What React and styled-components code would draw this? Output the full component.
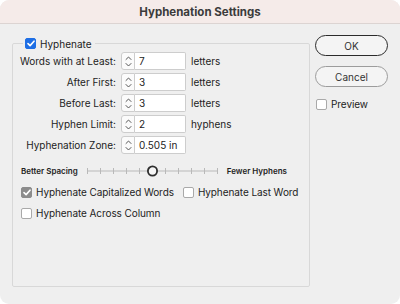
import React from 'react'
import styled, { createGlobalStyle } from 'styled-components'

const GlobalStyle = createGlobalStyle`
  html, body {
    margin: 0;
    padding: 0;
    background: #ffffff;
  }
  body {
    font-family: Inter, "Liberation Sans", sans-serif;
    color: #232323;
  }
`

const Window = styled.div`
  width: 400px;
  height: 304px;
  background: #efefef;
  border-radius: 9px;
  overflow: hidden;
  display: flex;
  flex-direction: column;
`

const TitleBar = styled.header`
  flex: none;
  height: 23px;
  display: flex;
  align-items: center;
  justify-content: center;
  background: #f5ebe9;
  border-bottom: 1px solid #dcd4d2;
  font-size: 11.5px;
  font-weight: 700;
  color: #3b3b3b;
`

const Body = styled.div`
  display: flex;
  align-items: flex-start;
  padding: 11px 12px 0 12px;
`

const Group = styled.fieldset`
  margin: 2px 0 0 0;
  width: 298px;
  height: 250px;
  box-sizing: border-box;
  border: 1px solid #d8d8d8;
  border-radius: 2px;
  padding: 2px 0 0 0;
  min-width: 0;
`

const Legend = styled.legend`
  margin-left: 10px;
  padding: 0 3px 0 2px;
  display: flex;
  align-items: center;
  gap: 4px;
  font-size: 10px;
  height: 13px;
`

const Fields = styled.div`
  display: flex;
  flex-direction: column;
  gap: 3px;
`

const FieldRow = styled.div`
  display: flex;
  align-items: center;
  height: 18px;
`

const Label = styled.span`
  width: 103px;
  text-align: right;
  font-size: 10px;
  white-space: nowrap;
`

const Spinner = styled.span`
  margin-left: 5px;
  width: 14px;
  height: 18px;
  box-sizing: border-box;
  background: #fbfbfb;
  border: 1px solid #cdcdcd;
  border-radius: 3px 0 0 3px;
  display: flex;
  align-items: center;
  justify-content: center;
`

const Input = styled.span`
  width: 51px;
  height: 18px;
  box-sizing: border-box;
  background: #ffffff;
  border: 1px solid #cdcdcd;
  border-left: none;
  border-radius: 0 2px 2px 0;
  padding-left: 4px;
  display: flex;
  align-items: center;
  font-size: 10px;
`

const Unit = styled.span`
  margin-left: 5px;
  font-size: 10px;
`

const SliderRow = styled.div`
  display: flex;
  align-items: center;
  gap: 9px;
  height: 14px;
  margin-top: 10px;
  padding-left: 8px;
`

const SliderLabel = styled.span`
  font-size: 8px;
  font-weight: 600;
  white-space: nowrap;
`

const CheckRow = styled.div`
  display: flex;
  align-items: center;
  height: 14px;
  margin-top: 7px;
  padding-left: 8px;
  gap: 9px;
`

const CheckItem = styled.label`
  display: flex;
  align-items: center;
  gap: 4px;
  font-size: 10px;
  letter-spacing: -0.08px;
  white-space: nowrap;
`

const Box = styled.span`
  flex: none;
  width: 11px;
  height: 11px;
  box-sizing: border-box;
  border-radius: 2px;
  display: flex;
  align-items: center;
  justify-content: center;
  background: ${(p) => (p.$tone === 'blue' ? '#1f6fe5' : p.$tone === 'gray' ? '#8c8c8c' : '#ffffff')};
  border: 1px solid ${(p) => (p.$tone === 'blue' ? '#1f6fe5' : p.$tone === 'gray' ? '#8c8c8c' : '#a9a9a9')};
`

const Side = styled.div`
  margin-left: 5px;
  width: 73px;
  display: flex;
  flex-direction: column;
`

const Button = styled.button`
  width: 73px;
  height: 21px;
  box-sizing: border-box;
  border-radius: 11px;
  background: #f4f4f4;
  border: ${(p) => (p.$primary ? '1.5px solid #2b2b2b' : '1px solid #9c9c9c')};
  font-family: inherit;
  font-size: 10px;
  color: #333333;
  padding: 0;
  margin-top: ${(p) => (p.$primary ? '0' : '10px')};
`

const PreviewRow = styled.div`
  margin-top: 10px;
  margin-left: 1px;
  height: 14px;
  display: flex;
  align-items: center;
`

const Check = () => (
  <svg width="8" height="7" viewBox="0 0 8 7">
    <path d="M1 3.6 L3.1 5.6 L7 1.2" fill="none" stroke="#fff" strokeWidth="1.6" strokeLinecap="round" strokeLinejoin="round" />
  </svg>
)

const CheckBox = ({ tone }) => <Box $tone={tone}>{tone && <Check />}</Box>

const Stepper = () => (
  <svg width="7" height="13" viewBox="0 0 7 13">
    <path d="M1 4.5 L3.5 2 L6 4.5 M1 8.5 L3.5 11 L6 8.5" fill="none" stroke="#555" strokeWidth="1" strokeLinecap="round" strokeLinejoin="round" />
  </svg>
)

const Slider = ({ ticks, value }) => {
  const w = 131
  const step = (w - 1) / (ticks - 1)
  return (
    <svg width={w} height="14" viewBox={`0 0 ${w} 14`}>
      <line x1="0.5" y1="7" x2={w - 0.5} y2="7" stroke="#b9b9b9" strokeWidth="1" />
      {Array.from({ length: ticks }, (_, i) => (
        <line key={i} x1={0.5 + i * step} y1="4" x2={0.5 + i * step} y2="10" stroke="#b9b9b9" strokeWidth="1" />
      ))}
      <circle cx={0.5 + value * step} cy="7" r="4.6" fill="#f6f6f6" stroke="#2e2e2e" strokeWidth="1.8" />
    </svg>
  )
}

const fields = [
  { label: 'Words with at Least:', value: '7', unit: 'letters' },
  { label: 'After First:', value: '3', unit: 'letters' },
  { label: 'Before Last:', value: '3', unit: 'letters' },
  { label: 'Hyphen Limit:', value: '2', unit: 'hyphens' },
  { label: 'Hyphenation Zone:', value: '0.505 in' },
]

export default function App() {
  return (
    <>
      <GlobalStyle />
      <Window>
        <TitleBar>Hyphenation Settings</TitleBar>
        <Body>
          <Group>
            <Legend>
              <CheckBox tone="blue" />
              Hyphenate
            </Legend>
            <Fields>
              {fields.map((f) => (
                <FieldRow key={f.label}>
                  <Label>{f.label}</Label>
                  <Spinner><Stepper /></Spinner>
                  <Input>{f.value}</Input>
                  {f.unit && <Unit>{f.unit}</Unit>}
                </FieldRow>
              ))}
            </Fields>
            <SliderRow>
              <SliderLabel>Better Spacing</SliderLabel>
              <Slider ticks={11} value={5} />
              <SliderLabel>Fewer Hyphens</SliderLabel>
            </SliderRow>
            <CheckRow>
              <CheckItem><CheckBox tone="gray" />Hyphenate Capitalized Words</CheckItem>
              <CheckItem><CheckBox />Hyphenate Last Word</CheckItem>
            </CheckRow>
            <CheckRow>
              <CheckItem><CheckBox />Hyphenate Across Column</CheckItem>
            </CheckRow>
          </Group>
          <Side>
            <Button $primary>OK</Button>
            <Button>Cancel</Button>
            <PreviewRow>
              <CheckItem><CheckBox />Preview</CheckItem>
            </PreviewRow>
          </Side>
        </Body>
      </Window>
    </>
  )
}
